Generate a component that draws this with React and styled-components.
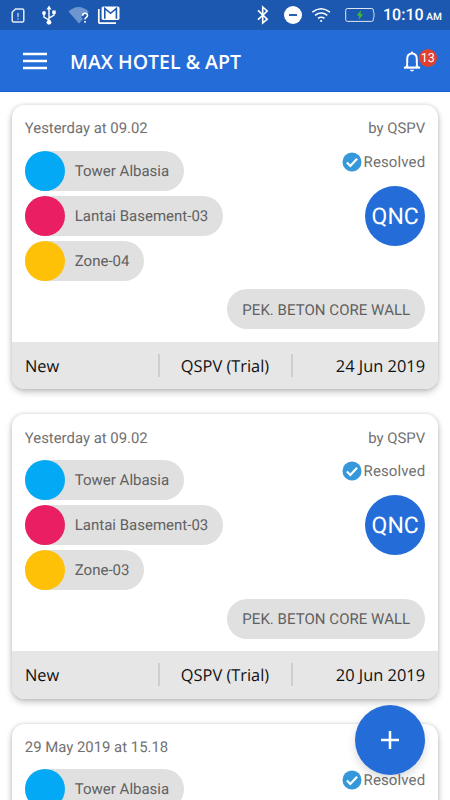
import React from "react";
import styled, { createGlobalStyle } from "styled-components";

const GlobalStyle = createGlobalStyle`
  * { box-sizing: border-box; }
  html, body { margin: 0; padding: 0; background: #fff; }
  body {
    font-family: Roboto, "Noto Sans", sans-serif;
    overflow: hidden;
    text-rendering: geometricPrecision;
  }
`;

const Screen = styled.div`
  position: relative;
  width: 450px;
  height: 800px;
  overflow: hidden;
  background: #fff;
`;

const StatusBar = styled.div`
  display: flex;
  justify-content: space-between;
  height: 30px;
  background: #1d58b0;
`;

const StatusIcons = styled.svg`
  display: block;
  flex: none;
`;

const StatusRight = styled.div`
  display: flex;
  align-items: center;
  padding-right: 9px;
`;

const Clock = styled.div`
  width: 58px;
  padding-top: 2px;
  color: #fff;
  font-size: 16px;
  font-weight: 500;
  line-height: 30px;
  white-space: nowrap;
`;

const Meridiem = styled.span`
  font-size: 10.2px;
`;

const AppBar = styled.header`
  display: flex;
  align-items: center;
  height: 62px;
  padding: 0 11px 0 23px;
  background: #246cd7;
  border-bottom: 1px solid #1560cf;
`;

const Title = styled.h1`
  flex: 1;
  margin: 0 0 0 23px;
  color: #fff;
  font-family: "Open Sans", sans-serif;
  font-size: 19.5px;
  font-weight: 600;
  line-height: 30px;
  padding-top: 2px;
`;

const BellWrap = styled.div`
  position: relative;
  width: 36px;
  height: 30px;
`;

const Badge = styled.span`
  position: absolute;
  left: 15.7px;
  top: 3px;
  width: 18px;
  height: 18px;
  border-radius: 50%;
  background: #e0402f;
  color: #fff;
  font-size: 12.5px;
  line-height: 19px;
  text-align: center;
`;

const List = styled.main`
  display: flex;
  flex-direction: column;
  gap: 25px;
  padding: 13px 12.4px 0 12.4px;
`;

const Card = styled.article`
  flex: none;
  height: 284.3px;
  display: flex;
  flex-direction: column;
  overflow: hidden;
  border-radius: 12.5px;
  background: #fff;
  box-shadow: 0 3px 7px rgba(0, 0, 0, 0.24), 0 0 4px rgba(0, 0, 0, 0.12);
`;

const CardBody = styled.div`
  flex: 1;
  display: flex;
  flex-direction: column;
  padding: 12.4px;
`;

const Row = styled.div`
  display: flex;
  justify-content: space-between;
`;

const Meta = styled.span`
  color: #717171;
  font-size: 14.9px;
  line-height: 23px;
  height: 22px;
  white-space: nowrap;
`;

const StatusText = styled(Meta)`
  font-size: 15px;
  letter-spacing: 0.12px;
`;

const Details = styled(Row)`
  margin-top: 11.3px;
`;

const Chips = styled.div`
  display: flex;
  flex-direction: column;
  align-items: flex-start;
  gap: 5px;
`;

const Chip = styled.div`
  display: flex;
  align-items: center;
  height: 40px;
  padding-right: 15px;
  border-radius: 20px;
  background: #e0e0e0;
  color: #606060;
  font-size: 15px;
  white-space: nowrap;
`;

const Dot = styled.span`
  width: 40px;
  height: 40px;
  margin-right: 10px;
  border-radius: 50%;
  background: ${(p) => p.$color};
`;

const Side = styled.div`
  display: flex;
  flex-direction: column;
  align-items: flex-end;
`;

const Status = styled.div`
  display: flex;
  align-items: center;
  gap: 1.4px;
  height: 22px;
`;

const Avatar = styled.div`
  width: 60px;
  height: 60px;
  margin-top: 13px;
  border-radius: 50%;
  background: #246cd7;
  color: #fff;
  font-size: 23px;
  line-height: 61px;
  text-align: center;
`;

const WorkChip = styled(Chip)`
  align-self: flex-end;
  margin-top: 8.8px;
  padding: 1px 15px 0;
  letter-spacing: 0.04px;
`;

const CardFooter = styled.footer`
  display: grid;
  grid-template-columns: 1fr 135px 1fr;
  align-items: center;
  flex: none;
  height: 47.3px;
  padding: 0 12.5px;
  background: #e6e6e6;
  color: #111;
  font-family: "Open Sans", sans-serif;
  font-size: 16.4px;
`;

const FooterMiddle = styled.span`
  height: 23px;
  line-height: 24px;
  border: solid #cecece;
  border-width: 0 2px;
  text-align: center;
  white-space: nowrap;
`;

const FooterEnd = styled.span`
  text-align: right;
  white-space: nowrap;
`;

const Fab = styled.button`
  position: absolute;
  left: 355px;
  top: 705px;
  display: grid;
  place-items: center;
  width: 70px;
  height: 70px;
  padding: 0;
  border: 0;
  border-radius: 50%;
  background: #246cd7;
  box-shadow: 0 4px 8px rgba(0, 0, 0, 0.15);
`;

const LeftStatus = () => (
  <StatusIcons width="124" height="30" viewBox="0 0 124 30" fill="none" stroke="#fff">
    <path d="M15.5 9H22.3Q23.8 9 23.8 10.5V20.5Q23.8 22 22.3 22H13.7Q12.2 22 12.2 20.5V12.3Z" strokeWidth="1.5" strokeOpacity=".88" />
    <path d="M18 13V17M18 18.2V19.5" strokeWidth="1.4" strokeOpacity=".7" />
    <path d="M49 8V22M49 20L44 17V13.5M49 18.2L54 15.2V12" strokeWidth="1.4" />
    <path d="M49 5.5L46.5 9.5H51.5ZM52.3 10.5H55.7V14H52.3Z" fill="#fff" stroke="none" />
    <circle cx="44" cy="13" r="1.9" fill="#fff" stroke="none" />
    <circle cx="49" cy="22.3" r="2.4" fill="#fff" stroke="none" />
    <path d="M68.5 11.5Q78.5 2.5 88.8 11.5L87.2 13.2Q81.5 12.5 81.5 17.5L83 19L79 23.5Z" fill="#6d96d0" stroke="none" />
    <path d="M82.6 15.7Q82.6 13.2 85 13.2Q87.5 13.2 87.5 15.4Q87.5 16.6 86.2 17.4Q85 18.2 85 19.5M85 21V22.7" strokeWidth="1.6" />
    <path d="M98.8 9V22.3Q98.8 23.2 99.7 23.2H116" strokeWidth="1.7" />
    <path d="M103.2 6.5H117.8Q119.5 6.5 119.5 8V18.3Q119.5 20 117.8 20H103.2Q101.6 20 101.6 18.3V8Q101.6 6.5 103.2 6.5Z" fill="#fff" stroke="none" />
    <path d="M104.8 18.8V8.5L110.6 13.3L116.4 8.5V18.8" stroke="#1d58b0" strokeWidth="1.6" />
  </StatusIcons>
);

const RightStatus = () => (
  <StatusIcons width="132" height="30" viewBox="251 0 132 30" fill="none" stroke="#fff">
    <path d="M258 10.3L267.2 19.1L262.7 23V7L267.2 11L258 19.7" strokeWidth="1.6" />
    <circle cx="293" cy="15" r="9" fill="#fff" stroke="none" />
    <path d="M289 15H297" stroke="#1d58b0" strokeWidth="1.9" />
    <path d="M312.3 12.1Q321 5.4 330 12.1M315 15.3Q321.2 10.7 327.3 15.3M318 18.4Q321.2 16 324.5 18.4" strokeWidth="1.6" />
    <circle cx="321.2" cy="21" r="1.1" fill="#fff" stroke="none" />
    <path d="M347.5 8.5H371.5Q373.4 8.5 373.4 10.3V12.5M373.4 17.5V19.6Q373.4 21.4 371.5 21.4H347.5Q345.7 21.4 345.7 19.6V10.3Q345.7 8.5 347.5 8.5" strokeWidth="1" strokeOpacity=".85" />
    <path d="M374 12.5V17.5" strokeWidth="1" strokeOpacity=".8" />
    <path d="M361 10.2L356.8 15.6H359.4L358.7 19.8L363 14.3H360.4Z" fill="#43bf25" stroke="none" />
  </StatusIcons>
);

const MenuIcon = () => (
  <svg width="24" height="18" viewBox="0 0 24 18" stroke="#fff" strokeWidth="2.6">
    <path d="M0 2H24M0 9H24M0 16H24" />
  </svg>
);

const BellIcon = () => (
  <svg width="20" height="30" viewBox="0 0 20 30" fill="none">
    <path d="M4.2 21.8V13.2Q4.2 7.6 9 7.6Q13.8 7.6 13.8 13.2V21.8" stroke="#fff" strokeWidth="2" />
    <path d="M.9 21.7H17.1" stroke="#fff" strokeWidth="2" />
    <path d="M3.5 19L1 22H17L14.5 19ZM7.8 8V6.6Q7.8 5.5 9 5.5Q10.2 5.5 10.2 6.6V8ZM7 23.8H11Q10.8 25.6 9 25.6Q7.2 25.6 7 23.8Z" fill="#fff" />
    <path d="M5.2 17H12.8V20.5H5.2Z" fill="#246cd7" />
  </svg>
);

const CheckIcon = () => (
  <svg width="20" height="20" viewBox="0 0 20 20">
    <circle cx="10" cy="10" r="9.5" fill="#3498db" />
    <path d="M4.9 10.4L8.3 13.9L15.1 6.7" fill="none" stroke="#fff" strokeWidth="2.2" />
  </svg>
);

const PlusIcon = () => (
  <svg width="18" height="18" viewBox="0 0 18 18" stroke="#fff" strokeWidth="2.5">
    <path d="M0 9H18M9 0V18" />
  </svg>
);

const cards = [
  { created: "Yesterday at 09.02", zone: "Zone-04", due: "24 Jun 2019" },
  { created: "Yesterday at 09.02", zone: "Zone-03", due: "20 Jun 2019" },
  { created: "29 May 2019 at 15.18" },
];

function ReportCard({ created, zone, due }) {
  return (
    <Card>
      <CardBody>
        <Row>
          <Meta>{created}</Meta>
          <Meta>by QSPV</Meta>
        </Row>
        <Details>
          <Chips>
            <Chip><Dot $color="#03a9f4" />Tower Albasia</Chip>
            {zone && <Chip><Dot $color="#e91e63" />Lantai Basement-03</Chip>}
            {zone && <Chip><Dot $color="#ffc107" />{zone}</Chip>}
          </Chips>
          <Side>
            <Status><CheckIcon /><StatusText>Resolved</StatusText></Status>
            {zone && <Avatar>QNC</Avatar>}
          </Side>
        </Details>
        {zone && <WorkChip>PEK. BETON CORE WALL</WorkChip>}
      </CardBody>
      {due && (
        <CardFooter>
          <span>New</span>
          <FooterMiddle>QSPV (Trial)</FooterMiddle>
          <FooterEnd>{due}</FooterEnd>
        </CardFooter>
      )}
    </Card>
  );
}

export default function App() {
  return (
    <Screen>
      <GlobalStyle />
      <StatusBar>
        <LeftStatus />
        <StatusRight>
          <RightStatus />
          <Clock>10:10<Meridiem> AM</Meridiem></Clock>
        </StatusRight>
      </StatusBar>
      <AppBar>
        <MenuIcon />
        <Title>MAX HOTEL &amp; APT</Title>
        <BellWrap>
          <BellIcon />
          <Badge>13</Badge>
        </BellWrap>
      </AppBar>
      <List>
        {cards.map((card, i) => <ReportCard key={i} {...card} />)}
      </List>
      <Fab aria-label="Add"><PlusIcon /></Fab>
    </Screen>
  );
}
